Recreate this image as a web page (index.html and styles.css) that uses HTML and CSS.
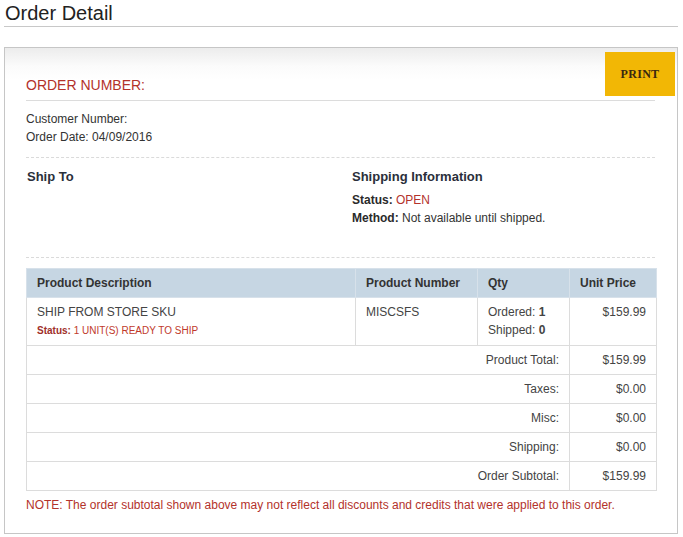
FILE: index.html
```html
<!DOCTYPE html>
<html>
<head>
<meta charset="utf-8">
<title>Order Detail</title>
<link rel="stylesheet" href="styles.css">
</head>
<body>
<div class="page">
  <h1 class="page-title">Order Detail</h1>
  <div class="panel">
    <button class="print-btn">PRINT</button>
    <h2 class="order-number">ORDER NUMBER:</h2>
    <div class="order-meta">
      <div>Customer Number:</div>
      <div>Order Date: 04/09/2016</div>
    </div>
    <div class="ship-section">
      <div class="ship-col">
        <h3 class="section-title">Ship To</h3>
      </div>
      <div class="ship-col">
        <h3 class="section-title">Shipping Information</h3>
        <div class="info-line"><b>Status:</b> <span class="red">OPEN</span></div>
        <div class="info-line"><b>Method:</b> Not available until shipped.</div>
      </div>
    </div>
    <table class="items">
      <colgroup>
        <col class="c-desc"><col class="c-num"><col class="c-qty"><col class="c-price">
      </colgroup>
      <thead>
        <tr>
          <th>Product Description</th>
          <th>Product Number</th>
          <th>Qty</th>
          <th>Unit Price</th>
        </tr>
      </thead>
      <tbody>
        <tr class="item-row">
          <td>
            <div>SHIP FROM STORE SKU</div>
            <div class="item-status"><b>Status:</b> 1 UNIT(S) READY TO SHIP</div>
          </td>
          <td>MISCSFS</td>
          <td>
            <div>Ordered: <b>1</b></div>
            <div>Shipped: <b>0</b></div>
          </td>
          <td class="num">$159.99</td>
        </tr>
        <tr class="total-row"><td colspan="3" class="label">Product Total:</td><td class="num">$159.99</td></tr>
        <tr class="total-row"><td colspan="3" class="label">Taxes:</td><td class="num">$0.00</td></tr>
        <tr class="total-row"><td colspan="3" class="label">Misc:</td><td class="num">$0.00</td></tr>
        <tr class="total-row"><td colspan="3" class="label">Shipping:</td><td class="num">$0.00</td></tr>
        <tr class="total-row"><td colspan="3" class="label">Order Subtotal:</td><td class="num">$159.99</td></tr>
      </tbody>
    </table>
    <p class="note">NOTE: The order subtotal shown above may not reflect all discounts and credits that were applied to this order.</p>
  </div>
</div>
</body>
</html>
```

FILE: styles.css
```css
* { box-sizing: border-box; }
html, body { margin: 0; padding: 0; background: #fff; }
body {
  font-family: "Liberation Sans", Arial, sans-serif;
  font-size: 12px;
  color: #333;
}
.page { padding: 0 5px 0 4px; }
.page-title {
  margin: 0;
  padding: 3px 0 2px 1px;
  font-size: 20px;
  line-height: 21px;
  font-weight: normal;
  color: #222;
  border-bottom: 1px solid #c8c8c8;
}
.panel {
  position: relative;
  margin-top: 20px;
  border: 1px solid #c6c6c6;
  background: linear-gradient(to bottom, #ececec 0, #fbfbfb 18px, #fff 32px);
  padding: 27px 22px 19px 21px;
}
.print-btn {
  position: absolute;
  top: 4px;
  right: 2px;
  width: 70px;
  height: 44px;
  border: 0;
  background: #f2b705;
  color: #3a2810;
  font-family: "Liberation Serif", "Times New Roman", serif;
  font-weight: bold;
  font-size: 12px;
  letter-spacing: 0.3px;
  padding: 0;
}
.order-number {
  margin: 0;
  font-size: 14px;
  line-height: 20px;
  font-weight: normal;
  color: #b3322b;
  padding-bottom: 5px;
  border-bottom: 1px solid #dcdcdc;
}
.order-meta {
  padding: 9px 0 11px;
  line-height: 18px;
  border-bottom: 1px dashed #dadada;
}
.ship-section {
  display: grid;
  grid-template-columns: 325px 1fr;
  height: 100px;
  padding-top: 9px;
  border-bottom: 1px dashed #dadada;
}
.ship-col { padding-left: 1px; }
.section-title {
  margin: 0 0 4px;
  font-size: 13px;
  line-height: 20px;
  font-weight: bold;
  color: #2a2f3a;
}
.info-line { line-height: 18px; }
.info-line b { color: #2a2a2a; }
.red { color: #b3322b; }
.items {
  width: 100%;
  margin-top: 10px;
  border-collapse: collapse;
  table-layout: fixed;
  color: #444;
}
.c-desc { width: 329px; }
.c-num { width: 122px; }
.c-qty { width: 92px; }
.c-price { width: 87px; }
.items th {
  background: #c6d6e3;
  border: 1px solid #d7e1ea;
  height: 29px;
  padding: 0 10px;
  text-align: left;
  font-weight: bold;
  font-size: 12px;
  color: #333;
}
.items td {
  border: 1px solid #dcdcdc;
  padding: 0 10px;
  line-height: 18px;
}
.item-row td {
  height: 48px;
  vertical-align: top;
  padding-top: 5px;
}
.item-status {
  font-size: 10px;
  line-height: 14px;
  margin-top: 3px;
  color: #c0392b;
}
.item-status b { color: #a0302a; }
.total-row td { height: 29px; }
.items .num { text-align: right; }
.items .label { text-align: right; }
.note {
  margin: 5px 0 0;
  line-height: 18px;
  color: #b3322b;
}
```
